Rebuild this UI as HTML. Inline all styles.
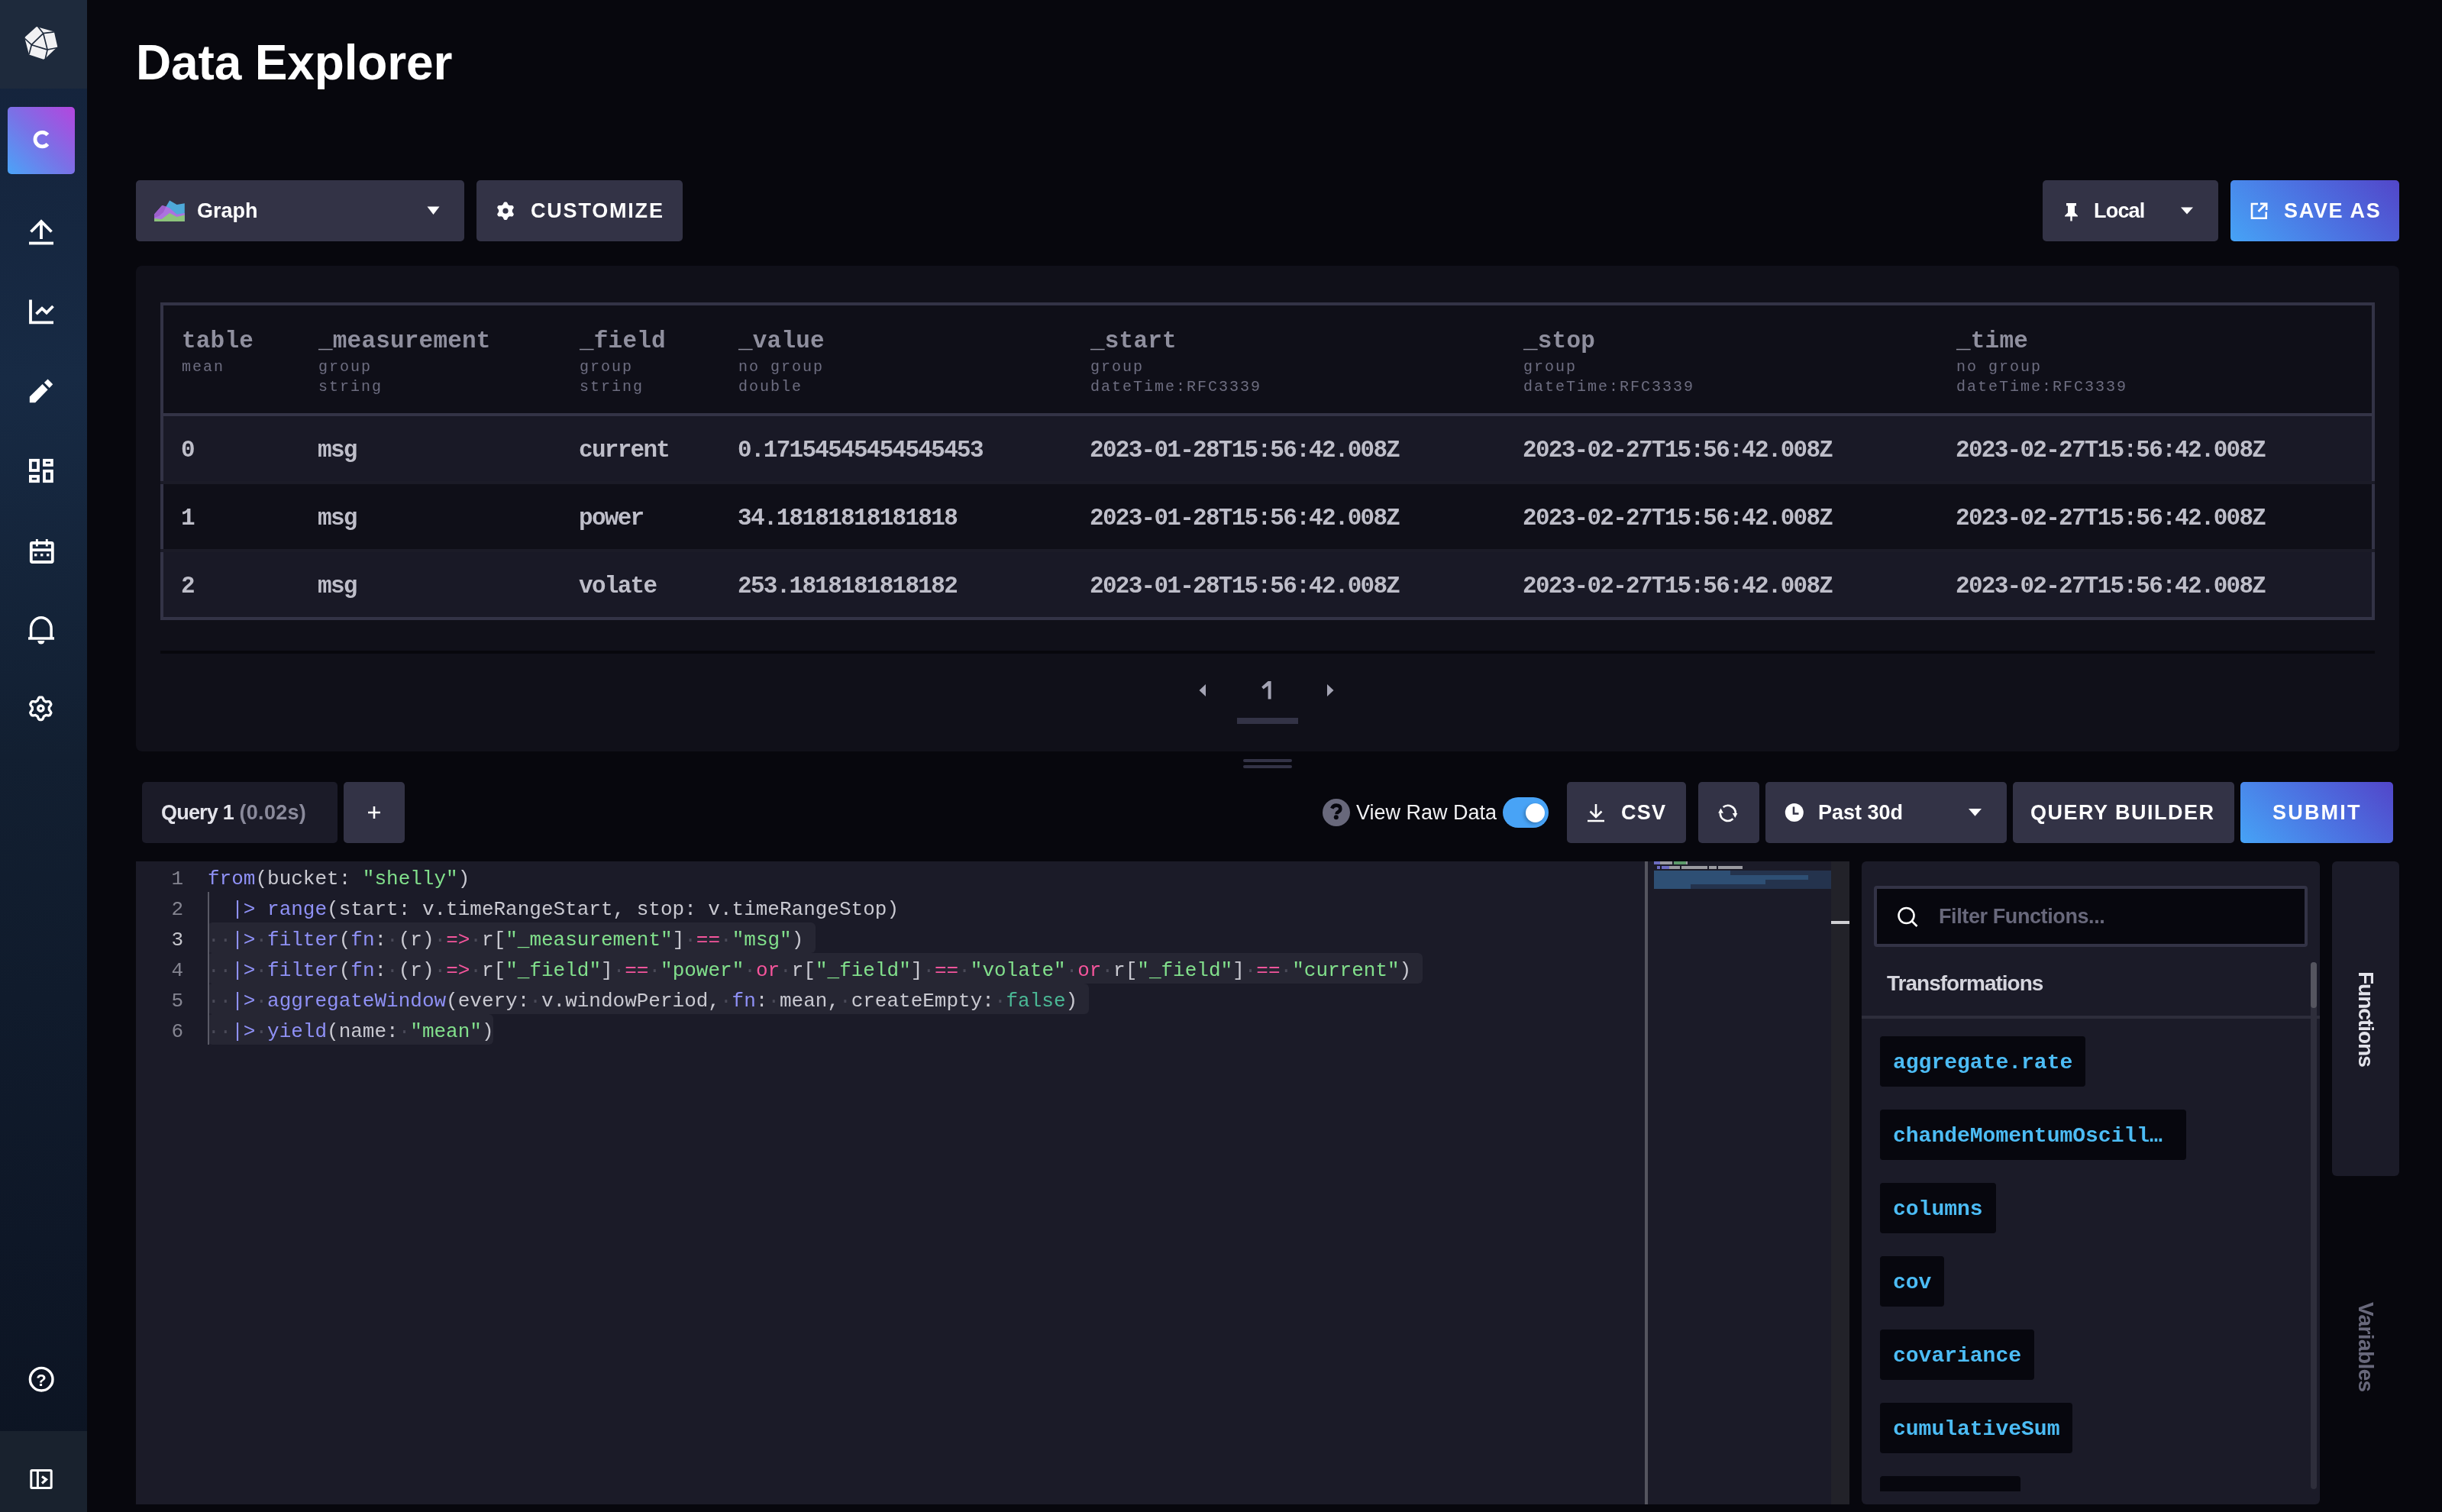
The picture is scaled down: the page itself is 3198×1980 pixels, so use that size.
<!DOCTYPE html>
<html><head><meta charset="utf-8">
<style>
*{box-sizing:border-box;margin:0;padding:0}
html,body{width:3198px;height:1980px;overflow:hidden;background:#07070d;font-family:"Liberation Sans",sans-serif;color:#fff}
.abs{position:absolute}
#side{left:0;top:0;width:114px;height:1980px;background:linear-gradient(180deg,#14223a 0%,#172a44 25%,#121f31 50%,#0e1727 82%,#0c1422 100%)}
#logo{left:0;top:0;width:114px;height:116px;background:#1e2a3c}
#sidebot{left:0;top:1874px;width:114px;height:106px;background:#19222e}
#avatar{left:10px;top:140px;width:88px;height:88px;border-radius:5px;background:linear-gradient(45deg,#4aa4f8 0%,#7b70e6 50%,#b445de 100%);font-weight:bold;font-size:32px;text-align:center;line-height:84px;color:#fff}
.sico{position:absolute;left:33px;width:42px;height:42px}
h1{position:absolute;left:178px;top:45px;font-size:64px;font-weight:bold;letter-spacing:-0.15px;color:#fff;white-space:nowrap}
.btn{position:absolute;height:80px;border-radius:5px;background:#333346;color:#fff;font-weight:bold;white-space:nowrap}
.btn .t{position:absolute;top:0;line-height:80px;font-size:27px}
.grad{background:linear-gradient(45deg,#46a3f6 0%,#4c6fe0 55%,#5246c9 100%)}
#panel{left:178px;top:348px;width:2964px;height:636px;border-radius:8px;background:#101019}

#tbl{left:210px;top:396px;width:2900px;height:416px;border:4px solid #333346;background:#0f0f18}
#tbl .hdr{position:absolute;left:0;top:0;width:100%;height:145px;border-bottom:4px solid #333346}
#tbl .c{position:absolute;top:30px;margin-left:-1px;white-space:nowrap}
#tbl .c b{display:block;font-size:31px;letter-spacing:0.2px;color:#8f8f9e;line-height:34px}
#tbl .c i{display:block;font-style:normal;font-size:20px;letter-spacing:2px;color:#6d6d80;line-height:26px;margin-top:4px}
#tbl .row{position:absolute;left:0;width:100%;height:85px}
#tbl .strip{position:absolute;left:-4px;width:2900px;height:4px;background:#1b1b27}
#tbl .r0{background:#191926}
#tbl .row span{position:absolute;top:2px;margin-left:-2px;line-height:85px;font-size:31px;letter-spacing:-1.72px;font-weight:bold;color:#bebec9;white-space:nowrap}

#editor{left:178px;top:1128px;width:2244px;height:842px;background:#1b1b28}
#fpanel{left:2438px;top:1128px;width:600px;height:842px;border-radius:6px;background:#1b1b28}

#code{left:178px;top:1131px;width:1976px;height:842px;font-size:26px;overflow:hidden}
#code .ln{position:absolute;left:0;width:62px;text-align:right;line-height:40px;color:#858591;height:40px}
#code .ln.act{color:#c6c6cc}
#code .cl{position:absolute;left:94px;line-height:40px;height:40px;white-space:pre;color:#c9c9d1}
#code .ws{color:#4a4a58}
#code .selb{position:absolute;left:94px;height:40px;background:#262633;border-radius:6px}
#code .guide{position:absolute;left:94px;top:37px;width:2px;height:200px;background:#5a5a66}

.fi{position:absolute;left:24px;height:66px;line-height:70px;overflow:hidden;padding:0 17px;border-radius:4px;background:#07070e;color:#4cbcf5;font-family:"Liberation Mono",monospace;font-weight:bold;font-size:28px;white-space:nowrap}
.vt{position:absolute;width:88px;line-height:88px;writing-mode:vertical-rl;white-space:nowrap;font-size:28px;font-weight:bold}
.mono{font-family:"Liberation Mono",monospace}
</style></head>
<body>
<div id="wrap" style="position:absolute;left:0;top:0;width:3198px;height:1980px;will-change:transform">
<div id="side" class="abs"></div>
<div id="logo" class="abs"></div>
<div id="sidebot" class="abs"></div>
<svg class="abs" style="left:0;top:0" width="114" height="1980" viewBox="0 0 114 1980">
<g fill="#f1f1f3">
<path d="M47.8,35 L66.5,40.2 L70.8,41.5 L75.3,61.3 L59.6,76.3 L57,77.8 L38,71.5 L32.8,51.5 L32.8,48.5 Z"/>
</g>
<g stroke="#1e2a3c" stroke-width="1.7" fill="none">
<path d="M50,35.3 L56.7,43.7 L70.8,41.8 M56.7,43.7 L41.3,58.7 L32.5,50.5 M56.7,43.7 L62.1,65.1 L75,62.5 M41.3,58.7 L62.1,65.1 L59.3,77 M41.3,58.7 L38,71.2"/>
</g>
<g stroke="#fff" stroke-width="3.8" fill="none" stroke-linecap="butt">
<path d="M40.5,303.5 L54,290 L67.5,303.5 M54,290.5 L54,313"/>
<path d="M38,318.5 L70,318.5"/>
<path d="M40,392.5 L40,422.3 L70,422.3"/>
<path d="M47.5,411.2 L55,403.8 L61,409.5 L69.5,401"/>
<rect x="39.9" y="602.8" width="10.1" height="13.2"/>
<rect x="58" y="602.8" width="9.9" height="6.2"/>
<rect x="39.9" y="623.8" width="10.1" height="6.4"/>
<rect x="58" y="616.8" width="9.9" height="13.4"/>
<rect x="40.8" y="711" width="28" height="25" rx="1.5"/>
<path d="M40.8,720.2 L68.8,720.2"/>
</g>
<g fill="#fff">
<path d="M38.8,519.6 L55.6,503 L62.6,510.3 L46.2,527.2 L38.8,527.2 Z"/>
<path d="M57.9,500.9 L62.6,496.4 L69.2,503.2 L64.7,508 Z"/>
<rect x="46.9" y="706" width="2.9" height="9.5"/>
<rect x="59.8" y="706" width="2.9" height="9.5"/>
<rect x="45" y="725" width="3.4" height="3.4"/>
<rect x="53" y="725" width="3.4" height="3.4"/>
<rect x="61" y="725" width="3.4" height="3.4"/>
<path d="M49.3,839 L58.3,839 A4.5,4.5 0 0 1 49.3,839 Z"/>
</g>
<g stroke="#fff" stroke-width="3.5" fill="none">
<path d="M40.6,836 L40.6,823 A13.25,14.2 0 0 1 67.1,823 L67.1,836"/>
<path d="M37,836 L71,836"/>
<path d="M53.3,913.1 L54.3,913.1 L55.2,913.2 L56.0,914.1 L56.6,915.4 L57.1,916.7 L57.5,917.6 L58.2,917.9 L58.8,918.3 L59.4,918.7 L60.0,919.1 L61.0,919.0 L62.4,918.7 L63.8,918.6 L65.0,918.9 L65.5,919.6 L66.0,920.4 L66.5,921.3 L66.9,922.2 L66.5,923.3 L65.7,924.5 L64.8,925.5 L64.2,926.4 L64.3,927.1 L64.3,927.8 L64.3,928.5 L64.2,929.2 L64.8,930.1 L65.7,931.1 L66.5,932.3 L66.9,933.4 L66.5,934.3 L66.0,935.1 L65.5,936.0 L65.0,936.7 L63.8,937.0 L62.4,936.9 L61.0,936.6 L60.0,936.5 L59.4,936.9 L58.8,937.3 L58.2,937.7 L57.5,938.0 L57.1,938.9 L56.6,940.2 L56.0,941.5 L55.2,942.4 L54.3,942.5 L53.3,942.5 L52.3,942.5 L51.4,942.4 L50.6,941.5 L50.0,940.2 L49.5,938.9 L49.1,938.0 L48.4,937.7 L47.8,937.3 L47.2,936.9 L46.6,936.5 L45.6,936.6 L44.2,936.9 L42.8,937.0 L41.6,936.7 L41.1,936.0 L40.6,935.1 L40.1,934.3 L39.7,933.4 L40.1,932.3 L40.9,931.1 L41.8,930.1 L42.4,929.2 L42.3,928.5 L42.3,927.8 L42.3,927.1 L42.4,926.4 L41.8,925.5 L40.9,924.5 L40.1,923.3 L39.7,922.2 L40.1,921.3 L40.6,920.4 L41.1,919.6 L41.6,918.9 L42.8,918.6 L44.2,918.7 L45.6,919.0 L46.6,919.1 L47.2,918.7 L47.8,918.3 L48.4,917.9 L49.1,917.6 L49.5,916.7 L50.0,915.4 L50.6,914.1 L51.4,913.2 L52.3,913.1Z" stroke-width="3.3" stroke-linejoin="round"/>
<circle cx="53.4" cy="927.6" r="3.6" stroke-width="3.4"/>
<circle cx="54.2" cy="1806.2" r="14.8" stroke-width="3.4"/>
</g>
<g stroke="#fff" stroke-width="3" fill="none">
<rect x="40.8" y="1925.5" width="26.4" height="23" rx="1"/>
<path d="M49.4,1925.5 L49.4,1948.5"/>
<path d="M55,1933.5 L60.5,1937.5 L55,1942.5" stroke-width="3.2"/>
</g>
<text x="54" y="1814.5" fill="#fff" font-family="Liberation Sans" font-weight="bold" font-size="22" text-anchor="middle">?</text>
</svg>
<div id="avatar" class="abs"></div>
<svg class="abs" style="left:0;top:130px" width="114" height="110" viewBox="0 130 114 110"><path d="M62.4,176.6 A9.3,9.3 0 1 0 62.4,188.6" stroke="#fff" stroke-width="4.8" fill="none"/></svg>
<h1>Data Explorer</h1>

<div class="btn" style="left:178px;top:236px;width:430px"><span class="t" style="left:80px">Graph</span></div>
<div class="btn" style="left:624px;top:236px;width:270px"><span class="t" style="left:71px;letter-spacing:1.8px">CUSTOMIZE</span></div>
<div class="btn" style="left:2675px;top:236px;width:230px"><span class="t" style="left:67px;letter-spacing:-0.8px">Local</span></div>
<div class="btn grad" style="left:2921px;top:236px;width:221px"><span class="t" style="left:70px;letter-spacing:1.7px">SAVE AS</span></div>


<div id="panel" class="abs"></div>
<svg class="abs" style="left:0;top:230px" width="3198" height="90" viewBox="0 230 3198 90">
 <path d="M217.5,270.6 L222.1,262.6 L231.6,268.1 L241.8,266.3 L241.8,290 L217.5,290 Z" fill="#4ea9d9"/>
 <path d="M202.1,280.4 L212.3,268.9 L217.5,270.6 L222.1,272.5 L231.6,280.7 L241.8,279.1 L241.8,290 L202.1,290 Z" fill="#ac72e0"/>
 <path d="M202.1,280.4 L212.3,268.9 L217.5,270.6 L214,278 L208,283 L202.1,285 Z" fill="#9d5fcc"/>
 <path d="M202.1,286 L211.6,287 L222.1,279.1 L231.6,284 L241.8,281.4 L241.8,290 L202.1,290 Z" fill="#8cc47b"/>
 <path d="M559.5,270.5 L575.5,270.5 L567.5,281 Z" fill="#fff"/>
 <path d="M662.0,264.4 L663.0,264.4 L664.0,265.0 L664.7,266.3 L665.2,267.5 L665.7,268.2 L666.4,268.6 L667.0,269.0 L667.9,269.1 L669.3,268.9 L670.7,268.9 L671.7,269.4 L672.2,270.3 L672.7,271.2 L672.7,272.3 L671.9,273.5 L671.1,274.6 L670.8,275.4 L670.8,276.2 L670.8,277.0 L671.1,277.8 L671.9,278.9 L672.7,280.1 L672.7,281.2 L672.2,282.1 L671.7,283.0 L670.7,283.5 L669.3,283.5 L667.9,283.3 L667.0,283.4 L666.4,283.8 L665.7,284.2 L665.2,284.9 L664.7,286.1 L664.0,287.4 L663.0,288.0 L662.0,288.0 L661.0,288.0 L660.0,287.4 L659.3,286.1 L658.8,284.9 L658.3,284.2 L657.6,283.8 L657.0,283.4 L656.1,283.3 L654.7,283.5 L653.3,283.5 L652.3,283.0 L651.8,282.1 L651.3,281.2 L651.3,280.1 L652.1,278.9 L652.9,277.8 L653.2,277.0 L653.2,276.2 L653.2,275.4 L652.9,274.6 L652.1,273.5 L651.3,272.3 L651.3,271.2 L651.8,270.3 L652.3,269.4 L653.3,268.9 L654.7,268.9 L656.1,269.1 L657.0,269.0 L657.6,268.6 L658.3,268.2 L658.8,267.5 L659.3,266.3 L660.0,265.0 L661.0,264.4Z" fill="#fff"/>
 <circle cx="662" cy="276.2" r="3.6" fill="#333346"/>
 <path d="M2706,266 L2719,266 L2719,269.5 L2717,269.5 L2717,278.5 L2721,282.5 L2721,283.5 L2704,283.5 L2704,282.5 L2708,278.5 L2708,269.5 L2706,269.5 Z" fill="#fff"/>
 <rect x="2711.3" y="283" width="2.4" height="6.5" fill="#fff"/>
 <path d="M2856,271.5 L2872,271.5 L2864,280.5 Z" fill="#fff"/>
 <g stroke="#fff" stroke-width="2.6" fill="none"><path d="M2957,267 L2949,267 L2949,285.7 L2967.7,285.7 L2967.7,277.5"/><path d="M2957.5,277 L2967.5,267"/><path d="M2960,266.9 L2968.2,266.9 L2968.2,275"/></g>
</svg>

<div id="tbl" class="abs mono">
 <div class="hdr">
  <div class="c" style="left:25px"><b>table</b><i>mean</i></div>
  <div class="c" style="left:204px"><b>_measurement</b><i>group<br>string</i></div>
  <div class="c" style="left:546px"><b>_field</b><i>group<br>string</i></div>
  <div class="c" style="left:754px"><b>_value</b><i>no group<br>double</i></div>
  <div class="c" style="left:1215px"><b>_start</b><i>group<br>dateTime:RFC3339</i></div>
  <div class="c" style="left:1782px"><b>_stop</b><i>group<br>dateTime:RFC3339</i></div>
  <div class="c" style="left:2349px"><b>_time</b><i>no group<br>dateTime:RFC3339</i></div>
 </div>
 <div class="row r0" style="top:145px"><span style="left:25px">0</span><span style="left:204px">msg</span><span style="left:546px">current</span><span style="left:754px">0.17154545454545453</span><span style="left:1215px">2023-01-28T15:56:42.008Z</span><span style="left:1782px">2023-02-27T15:56:42.008Z</span><span style="left:2349px">2023-02-27T15:56:42.008Z</span></div>
 <div class="strip" style="top:230px"></div>
 <div class="row r1" style="top:234px"><span style="left:25px">1</span><span style="left:204px">msg</span><span style="left:546px">power</span><span style="left:754px">34.18181818181818</span><span style="left:1215px">2023-01-28T15:56:42.008Z</span><span style="left:1782px">2023-02-27T15:56:42.008Z</span><span style="left:2349px">2023-02-27T15:56:42.008Z</span></div>
 <div class="strip" style="top:319px"></div>
 <div class="row r0" style="top:323px"><span style="left:25px">2</span><span style="left:204px">msg</span><span style="left:546px">volate</span><span style="left:754px">253.1818181818182</span><span style="left:1215px">2023-01-28T15:56:42.008Z</span><span style="left:1782px">2023-02-27T15:56:42.008Z</span><span style="left:2349px">2023-02-27T15:56:42.008Z</span></div>
</div>
<div class="abs" style="left:210px;top:852px;width:2900px;height:4px;background:#07070d"></div>
<svg class="abs" style="left:1560px;top:880px" width="200" height="80" viewBox="1560 880 200 80">
 <path d="M1579,896 L1570.5,904 L1579,912 Z" fill="#a4a4b4"/>
 <path d="M1738,896 L1746.5,904 L1738,912 Z" fill="#a4a4b4"/>
 <rect x="1620" y="940" width="80" height="8" fill="#333346"/>
 <path d="M1660.6,892 L1664.6,892 L1664.6,915.5 L1660.6,915.5 L1660.6,898 L1654.6,902.6 L1652.2,899.6 Z" fill="#a4a4b4"/>
</svg>

<div class="abs" style="left:1628px;top:994px;width:64px;height:4px;border-radius:2px;background:#333346"></div>
<div class="abs" style="left:1628px;top:1002px;width:64px;height:4px;border-radius:2px;background:#333346"></div>



<!-- query bar -->
<div class="abs" style="left:186px;top:1024px;width:256px;height:80px;border-radius:5px;background:#1b1b28"></div>
<div class="abs" style="left:211px;top:1024px;line-height:80px;font-size:27px;font-weight:bold;color:#e3e3ea;white-space:nowrap"><span style="letter-spacing:-0.8px">Query 1</span> <span style="color:#8a8a9b;letter-spacing:0.3px">(0.02s)</span></div>
<div class="btn" style="left:450px;top:1024px;width:80px"></div>
<svg class="abs" style="left:450px;top:1024px" width="80" height="80"><path d="M40,32 L40,48 M32,40 L48,40" stroke="#fff" stroke-width="2.6"/></svg>
<svg class="abs" style="left:1732px;top:1046px" width="36" height="36" viewBox="1732 1046 36 36"><circle cx="1750" cy="1064" r="18" fill="#68687b"/><path d="M1744.2,1058.6 Q1746,1054.6 1750,1054.6 Q1755.3,1054.6 1755.3,1059 Q1755.3,1061.8 1752.6,1063.3 Q1750.6,1064.4 1750.6,1066.2" stroke="#07070e" stroke-width="4.6" fill="none"/><circle cx="1749.8" cy="1070.2" r="3" fill="#07070e"/></svg>
<div class="abs" style="left:1776px;top:1044px;line-height:40px;font-size:27px;color:#f1f1f3;white-space:nowrap">View Raw Data</div>
<div class="abs" style="left:1968px;top:1044px;width:60px;height:40px;border-radius:20px;background:#48a3f6"></div>
<div class="abs" style="left:1998px;top:1052px;width:25px;height:25px;border-radius:50%;background:#fff;box-shadow:-2px 2px 4px rgba(0,0,0,.25)"></div>
<div class="btn" style="left:2052px;top:1024px;width:156px"><span class="t" style="left:71px;letter-spacing:1.3px">CSV</span></div>
<svg class="abs" style="left:2052px;top:1024px" width="80" height="80"><g stroke="#fff" stroke-width="2.6" fill="none"><path d="M38,29 L38,46 M30.5,38.5 L38,46 L45.5,38.5 M27,51 L49,51"/></g></svg>
<div class="btn" style="left:2224px;top:1024px;width:80px"></div>
<svg class="abs" style="left:2224px;top:1024px" width="80" height="80"><g stroke="#fff" stroke-width="2.6" fill="none"><path d="M32.64,33.02 A10,10 0 0 1 48.8,41.2"/><path d="M45.49,48.33 A10,10 0 0 1 28.8,40.6"/></g><path d="M44.9,41 L51.4,41 L48.3,47 Z M26.2,40.8 L32.9,40.8 L29.5,34.5 Z" fill="#fff"/></svg>
<div class="btn" style="left:2312px;top:1024px;width:316px"><span class="t" style="left:69px">Past 30d</span></div>
<svg class="abs" style="left:2312px;top:1024px" width="316" height="80"><circle cx="37.8" cy="40" r="12" fill="#fff"/><path d="M37,32.5 L37,41.5 L43.5,41.5" stroke="#333346" stroke-width="2.6" fill="none"/><path d="M266,35 L283,35 L274.5,44.8 Z" fill="#fff"/></svg>
<div class="btn" style="left:2636px;top:1024px;width:290px"><span class="t" style="left:23px;letter-spacing:1.5px">QUERY BUILDER</span></div>
<div class="btn grad" style="left:2934px;top:1024px;width:200px"><span class="t" style="left:42px;letter-spacing:2.2px">SUBMIT</span></div>

<!-- editor -->
<div id="editor" class="abs"></div>
<div id="code" class="abs mono">
<div class="selb" style="top:77px;width:795.6px"></div>
<div class="selb" style="top:117px;width:1591.2px"></div>
<div class="selb" style="top:157px;width:1154.4px"></div>
<div class="selb" style="top:197px;width:374.4px"></div>
<div class="guide"></div>
<div class="ln" style="top:0px">1</div>
<div class="cl" style="top:0px"><span style="color:#8f91f6">from</span><span style="color:#c9c9d1">(bucket: </span><span style="color:#82e08c">&quot;shelly&quot;</span><span style="color:#c9c9d1">)</span></div>
<div class="ln" style="top:40px">2</div>
<div class="cl" style="top:40px">  <span style="color:#8f91f6">|&gt;</span> <span style="color:#8f91f6">range</span><span style="color:#c9c9d1">(start: v.timeRangeStart, stop: v.timeRangeStop)</span></div>
<div class="ln act" style="top:80px">3</div>
<div class="cl" style="top:80px"><span class="ws">·</span><span class="ws">·</span><span style="color:#8f91f6">|&gt;</span><span class="ws">·</span><span style="color:#8f91f6">filter</span><span style="color:#c9c9d1">(</span><span style="color:#8f91f6">fn</span><span style="color:#c9c9d1">:</span><span class="ws">·</span><span style="color:#c9c9d1">(r)</span><span class="ws">·</span><span style="color:#f5559c">=&gt;</span><span class="ws">·</span><span style="color:#c9c9d1">r[</span><span style="color:#82e08c">&quot;_measurement&quot;</span><span style="color:#c9c9d1">]</span><span class="ws">·</span><span style="color:#f5559c">==</span><span class="ws">·</span><span style="color:#82e08c">&quot;msg&quot;</span><span style="color:#c9c9d1">)</span></div>
<div class="ln" style="top:120px">4</div>
<div class="cl" style="top:120px"><span class="ws">·</span><span class="ws">·</span><span style="color:#8f91f6">|&gt;</span><span class="ws">·</span><span style="color:#8f91f6">filter</span><span style="color:#c9c9d1">(</span><span style="color:#8f91f6">fn</span><span style="color:#c9c9d1">:</span><span class="ws">·</span><span style="color:#c9c9d1">(r)</span><span class="ws">·</span><span style="color:#f5559c">=&gt;</span><span class="ws">·</span><span style="color:#c9c9d1">r[</span><span style="color:#82e08c">&quot;_field&quot;</span><span style="color:#c9c9d1">]</span><span class="ws">·</span><span style="color:#f5559c">==</span><span class="ws">·</span><span style="color:#82e08c">&quot;power&quot;</span><span class="ws">·</span><span style="color:#f5559c">or</span><span class="ws">·</span><span style="color:#c9c9d1">r[</span><span style="color:#82e08c">&quot;_field&quot;</span><span style="color:#c9c9d1">]</span><span class="ws">·</span><span style="color:#f5559c">==</span><span class="ws">·</span><span style="color:#82e08c">&quot;volate&quot;</span><span class="ws">·</span><span style="color:#f5559c">or</span><span class="ws">·</span><span style="color:#c9c9d1">r[</span><span style="color:#82e08c">&quot;_field&quot;</span><span style="color:#c9c9d1">]</span><span class="ws">·</span><span style="color:#f5559c">==</span><span class="ws">·</span><span style="color:#82e08c">&quot;current&quot;</span><span style="color:#c9c9d1">)</span></div>
<div class="ln" style="top:160px">5</div>
<div class="cl" style="top:160px"><span class="ws">·</span><span class="ws">·</span><span style="color:#8f91f6">|&gt;</span><span class="ws">·</span><span style="color:#8f91f6">aggregateWindow</span><span style="color:#c9c9d1">(every:</span><span class="ws">·</span><span style="color:#c9c9d1">v.windowPeriod,</span><span class="ws">·</span><span style="color:#8f91f6">fn</span><span style="color:#c9c9d1">:</span><span class="ws">·</span><span style="color:#c9c9d1">mean,</span><span class="ws">·</span><span style="color:#c9c9d1">createEmpty:</span><span class="ws">·</span><span style="color:#4bb996">false</span><span style="color:#c9c9d1">)</span></div>
<div class="ln" style="top:200px">6</div>
<div class="cl" style="top:200px"><span class="ws">·</span><span class="ws">·</span><span style="color:#8f91f6">|&gt;</span><span class="ws">·</span><span style="color:#8f91f6">yield</span><span style="color:#c9c9d1">(name:</span><span class="ws">·</span><span style="color:#82e08c">&quot;mean&quot;</span><span style="color:#c9c9d1">)</span></div>
</div>

<svg class="abs" style="left:2154px;top:1128px" width="268" height="842" viewBox="2154 1128 268 842">
 <rect x="2154" y="1128" width="4" height="842" fill="#55555f"/>
 <rect x="2398" y="1128" width="24" height="842" fill="#222229"/>
 <rect x="2398" y="1206" width="24" height="4" fill="#d0d0d4"/>
 <rect x="2166" y="1140" width="232" height="24" fill="#24334d"/>
 <rect x="2166" y="1140" width="100" height="6" fill="#2e4f74"/>
 <rect x="2166" y="1146" width="202" height="6" fill="#2e4f74"/>
 <rect x="2166" y="1152" width="146" height="6" fill="#2e4f74"/>
 <rect x="2166" y="1158" width="48" height="6" fill="#2e4f74"/>
 <g fill="#6c6cc0"><rect x="2166" y="1128" width="8" height="4"/><rect x="2170" y="1134" width="4" height="4"/><rect x="2176" y="1134" width="10" height="4"/></g>
 <g fill="#9a9aa0"><rect x="2174" y="1128" width="16" height="4"/><rect x="2208" y="1128" width="2" height="4"/><rect x="2186" y="1134" width="14" height="4"/><rect x="2202" y="1134" width="34" height="4"/><rect x="2238" y="1134" width="10" height="4"/><rect x="2250" y="1134" width="32" height="4"/></g>
 <rect x="2192" y="1128" width="16" height="4" fill="#5c9a6a"/>
</svg>

<div id="fpanel" class="abs"></div>
<div class="abs" style="left:2454px;top:1160px;width:568px;height:80px;border:4px solid #333346;border-radius:4px;background:#07070e"></div>
<svg class="abs" style="left:2480px;top:1182px" width="36" height="36"><circle cx="16.5" cy="17" r="10" stroke="#fff" stroke-width="2.6" fill="none"/><path d="M23.5,24 L30.5,31" stroke="#fff" stroke-width="2.6"/></svg>
<div class="abs" style="left:2539px;top:1160px;line-height:80px;font-size:27px;font-weight:bold;color:#68687b;white-space:nowrap;letter-spacing:-0.4px">Filter Functions...</div>
<div class="abs" style="left:2471px;top:1268px;line-height:40px;font-size:28px;font-weight:bold;color:#d5d5dd;white-space:nowrap;letter-spacing:-1px">Transformations</div>
<div class="abs" style="left:2438px;top:1330px;width:600px;height:4px;background:#2d2d3b"></div>
<div class="abs" style="left:3026px;top:1260px;width:8px;height:690px;border-radius:4px;background:#2e2e3b"></div>
<div class="abs" style="left:3026px;top:1260px;width:8px;height:60px;border-radius:4px;background:#55555f"></div>
<div class="abs" style="left:2438px;top:1334px;width:580px;height:619px;overflow:hidden">
 <div class="fi" style="top:23px">aggregate.rate</div>
 <div class="fi" style="top:119px;width:401px">chandeMomentumOscill…</div>
 <div class="fi" style="top:215px">columns</div>
 <div class="fi" style="top:311px">cov</div>
 <div class="fi" style="top:407px">covariance</div>
 <div class="fi" style="top:503px">cumulativeSum</div>
 <div class="fi" style="top:599px;width:184px">&nbsp;</div>
</div>
<div class="abs" style="left:3054px;top:1128px;width:88px;height:412px;border-radius:6px;background:#1b1b28"></div>
<div class="vt" style="left:3054px;top:1272px;color:#e3e3ea;letter-spacing:-1px">Functions</div>
<div class="vt" style="left:3054px;top:1705px;color:#68687b;letter-spacing:-0.6px">Variables</div>

</div>
</body></html>
